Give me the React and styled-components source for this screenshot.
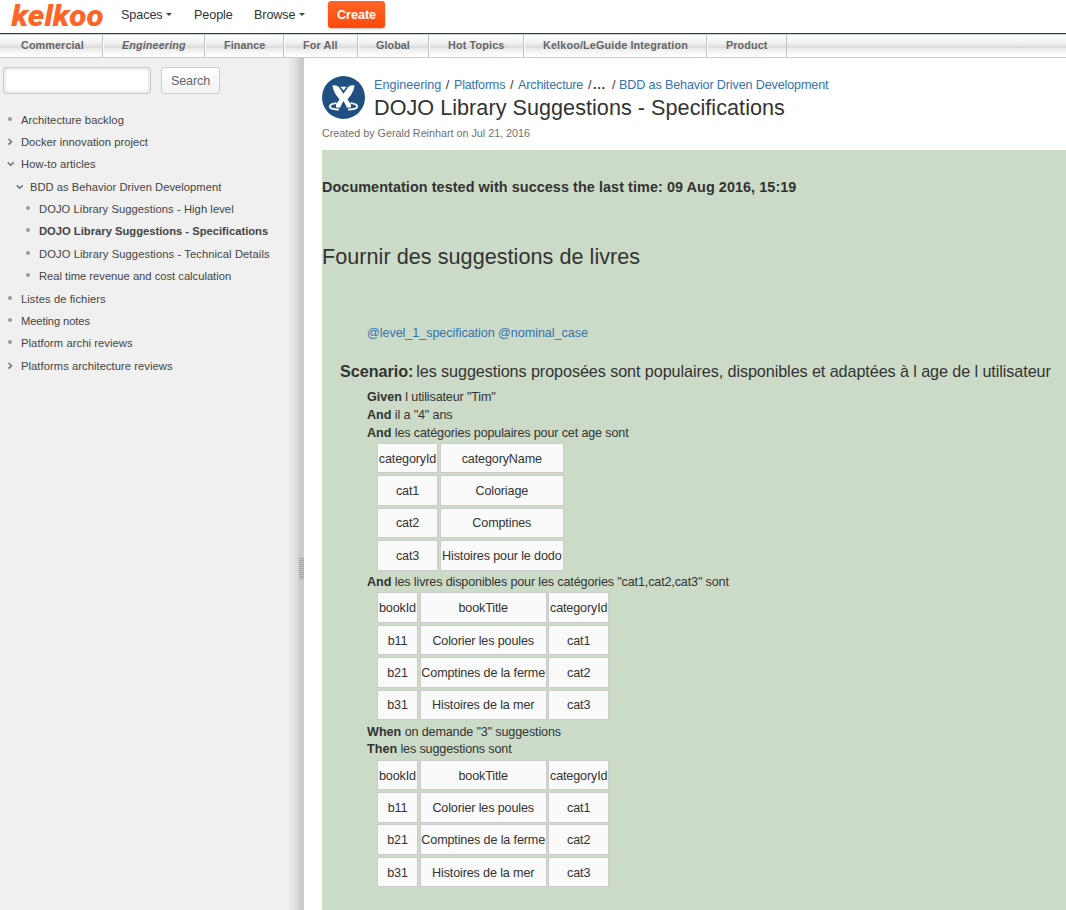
import React from "react";
import styled, { createGlobalStyle } from "styled-components";

const Global = createGlobalStyle`
  * { box-sizing: border-box; }
  html, body { margin: 0; height: 910px; overflow: hidden; background: #fff; }
  body { font-family: "Liberation Sans", Arial, sans-serif; font-size: 12.6px; color: #333; }
`;
const Page = styled.div`
  width: 1066px; height: 910px; display: flex; flex-direction: column; overflow: hidden;
`;
const Header = styled.header`
  height: 34px; flex: none; display: flex; align-items: flex-start; padding-left: 8px;
  background: #fff; border-bottom: 1px solid #2e3d54;
`;
const Logo = styled.svg`
  width: 100px; height: 33px; margin-right: 13px; flex: none; overflow: visible;
  text { font-family: Roboto, "Liberation Sans", sans-serif; font-weight: 900; font-style: italic; fill: #ff6428; }
`;
const NavItem = styled.a`
  width: ${(p) => p.$w}px; height: 30px; display: flex; align-items: center;
  gap: 3.5px; font-size: 12.6px; letter-spacing: -0.08px; color: #333; white-space: nowrap;
`;
const Caret = styled.i`
  border: 3px solid transparent; border-top-color: #444; border-bottom: 0; margin-top: -1px;
`;
const Create = styled.button`
  width: 57px; height: 27px; margin: 1px 0 0; padding: 0; border: 0; border-radius: 3px;
  background: linear-gradient(#ff6428, #ff4a0a); color: #fff; font: bold 12.6px "Liberation Sans", sans-serif;
  box-shadow: 0 1px 2px rgba(0,0,0,.25);
`;
const Menu = styled.nav`
  height: 24px; flex: none; display: flex; border-bottom: 1px solid #ccc; border-top: 1px solid #ccd0d8;
  background: linear-gradient(#fff 0%, #f2f2f2 35%, #dcdcdc 57%, #e8e8e8 61%, #f4f4f4 75%, #fff 100%);
`;
const MenuItem = styled.a`
  width: ${(p) => p.$w}px; padding-left: ${(p) => p.$pad || 18}px; border-right: 1px solid #c4c4c4;
  border-left: 1px solid #fff; font-size: 10.8px; font-weight: bold; line-height: 21px; color: #666;
  letter-spacing: ${(p) => p.$track || 0}px;
  font-style: ${(p) => (p.$on ? "italic" : "normal")}; white-space: nowrap;
  &:first-child { border-left-color: transparent; }
`;
const Body = styled.div`display: flex; flex: 1; min-height: 0;`;
const Sidebar = styled.aside`
  width: 299px; flex: none; padding-top: 9px;
  background: linear-gradient(90deg, #f0f0f0 0, #f0f0f0 287px, #e6e6e6 293px, #d4d4d4 299px);
`;
const SearchRow = styled.form`display: flex; gap: 10px; padding-left: 3px; margin-bottom: 14.5px;`;
const SearchInput = styled.input`
  width: 148px; height: 27px; border: 1px solid #ccc; border-radius: 3px; background: #fff;
  box-shadow: inset 0 0 4px rgba(0,0,0,.2);
`;
const SearchButton = styled.button`
  width: 59px; height: 27px; padding: 0; border: 1px solid #ccc; border-radius: 3px;
  background: linear-gradient(#fff, #f2f2f2); color: #666; font: 12.6px "Liberation Sans", sans-serif;
  letter-spacing: -0.15px;
`;
const TreeItem = styled.div`
  height: 22.36px; display: flex; align-items: center; padding-left: ${(p) => 5 + p.$level * 9}px;
  font-size: 11.2px; letter-spacing: ${(p) => p.$track || 0}px; color: #444;
  font-weight: ${(p) => (p.$on ? "bold" : "normal")}; white-space: nowrap;
`;
const TreeIcon = styled.svg`width: 10px; height: 10px; margin-right: 6px; flex: none;`;
const Splitter = styled.div`
  width: 5px; flex: none; background: #ccc; display: flex; align-items: flex-start; padding-top: 500px;
`;
const Grip = styled.div`
  width: 5px; height: 21px; background: repeating-linear-gradient(#a8a8a8 0 1px, #c2c2c2 1px 2px);
`;
const Main = styled.main`flex: 1; min-width: 0; padding: 18px 0 0 18px; display: flex; flex-direction: column;`;
const TitleBar = styled.div`display: flex; gap: 9px; height: 46px;`;
const SpaceIcon = styled.svg`width: 43px; height: 43px; flex: none;`;
const Crumbs = styled.div`
  display: flex; height: 18px; line-height: 18px; white-space: pre; font-size: 12.6px;
`;
const Crumb = styled.a`color: #3572b0; letter-spacing: ${(p) => p.$track || 0}px; width: ${(p) => p.$w}px;`;
const Ellipsis = styled.b`width: 14px; letter-spacing: 0.7px;`;
const Slash = styled.span`width: ${(p) => p.$w}px; padding-left: ${(p) => p.$pad}px;`;
const Title = styled.h1`
  margin: 0; font-size: 21.6px; line-height: 27px; font-weight: normal; letter-spacing: 0.04px; white-space: nowrap;
`;
const Meta = styled.div`font-size: 10.8px; line-height: 18px; color: #707070; height: 28px; padding-top: 2px; letter-spacing: -0.02px;`;
const Doc = styled.section`flex: 1; background: #ccdbc8; padding-top: 27px; white-space: nowrap;`;
const Tested = styled.div`font-size: 14.4px; font-weight: bold; line-height: 20px; letter-spacing: 0.07px;`;
const Feature = styled.h2`
  margin: 47px 0 0; font-size: 21.6px; font-weight: normal; line-height: 26px; letter-spacing: 0.04px;
`;
const Tags = styled.div`margin: 54px 0 0 45px; line-height: 18px; color: #3572b0; letter-spacing: -0.06px;`;
const Scenario = styled.h3`
  margin: 19px 0 0 18px; font-size: 16.2px; font-weight: normal; line-height: 20.4px; height: 26px;
  letter-spacing: -0.08px; word-spacing: -0.05px;
  b { letter-spacing: -0.05px; margin-right: -1.5px; }
`;
const Steps = styled.div`padding-left: 45px;`;
const Step = styled.div`
  line-height: 18px; height: 18px; padding-top: ${(p) => p.$lead ?? 0.6}px; letter-spacing: -0.15px;
  b { letter-spacing: 0; }
`;
const Table = styled.div`
  display: grid; grid-template-columns: ${(p) => p.$cols}; grid-auto-rows: 30.6px; gap: 1.8px;
  padding: 1.8px 0 1.8px 10px; margin-bottom: ${(p) => p.$after || 0}px;
`;
const Cell = styled.div`
  background: #fafafa; border: 1px solid #ccc; display: flex; align-items: center; justify-content: center;
  padding-top: 1.2px; letter-spacing: -0.14px;
`;

const MENU = [
  ["Commercial", 103, 20, 0.1], ["Engineering", 102, 18, 0.12], ["Finance", 79, 18, 0.08], ["For All", 74, 18, 0.12],
  ["Global", 71, 17, 0.05], ["Hot Topics", 95, 18, 0.15], ["Kelkoo/LeGuide Integration", 183, 18, 0.15], ["Product", 80, 18, 0.1],
];
const TREE = [
  ["Architecture backlog", 0, "dot", 0.08],
  ["Docker innovation project", 0, "closed", 0.03],
  ["How-to articles", 0, "open", 0.05],
  ["BDD as Behavior Driven Development", 1, "open", 0.03],
  ["DOJO Library Suggestions - High level", 2, "dot", 0.07],
  ["DOJO Library Suggestions - Specifications", 2, "dot", 0.01],
  ["DOJO Library Suggestions - Technical Details", 2, "dot", 0.09],
  ["Real time revenue and cost calculation", 2, "dot", 0],
  ["Listes de fichiers", 0, "dot", 0.08],
  ["Meeting notes", 0, "dot", -0.1],
  ["Platform archi reviews", 0, "dot", 0.07],
  ["Platforms architecture reviews", 0, "closed", 0.06],
];
const CATEGORIES = ["categoryId", "categoryName", "cat1", "Coloriage", "cat2", "Comptines", "cat3", "Histoires pour le dodo"];
const BOOKS = [
  "bookId", "bookTitle", "categoryId", "b11", "Colorier les poules", "cat1",
  "b21", "Comptines de la ferme", "cat2", "b31", "Histoires de la mer", "cat3",
];
const BOOK_COLS = "41px 126.8px 60.6px";

const Data = ({ cols, cells, after }) => (
  <Table $cols={cols} $after={after}>{cells.map((c, i) => <Cell key={i}>{c}</Cell>)}</Table>
);
const Marker = ({ kind }) => (
  <TreeIcon viewBox="0 0 10 10">
    {kind === "dot" && <circle cx="5" cy="4.1" r="2" fill="#999" />}
    {kind === "closed" && <path d="M3.5 2 L6.5 4.8 L3.5 7.6" fill="none" stroke="#707070" strokeWidth="1.5" />}
    {kind === "open" && <path d="M2.7 3.4 L5.7 6.2 L8.7 3.4" fill="none" stroke="#707070" strokeWidth="1.5" />}
  </TreeIcon>
);

export default function App() {
  return (
    <Page>
      <Global />
      <Header>
        <Logo viewBox="0 0 100 33">
          <text x="3.5" y="25.7" fontSize="29" textLength="92" lengthAdjust="spacingAndGlyphs">kelkoo</text>
        </Logo>
        <NavItem $w={73}>Spaces<Caret /></NavItem>
        <NavItem $w={60}>People</NavItem>
        <NavItem $w={74}>Browse<Caret /></NavItem>
        <Create>Create</Create>
      </Header>
      <Menu>
        {MENU.map(([t, w, pad, track]) => (
          <MenuItem key={t} $w={w} $pad={pad} $track={track} $on={t === "Engineering"}>{t}</MenuItem>
        ))}
      </Menu>
      <Body>
        <Sidebar>
          <SearchRow>
            <SearchInput />
            <SearchButton type="button">Search</SearchButton>
          </SearchRow>
          {TREE.map(([t, level, kind, track]) => (
            <TreeItem key={t} $level={level} $track={track} $on={t.endsWith("Specifications")}>
              <Marker kind={kind} />{t}
            </TreeItem>
          ))}
        </Sidebar>
        <Splitter><Grip /></Splitter>
        <Main>
          <TitleBar>
            <SpaceIcon viewBox="0 0 43 43">
              <circle cx="21.5" cy="21.5" r="21.5" fill="#205081" />
              <path d="M10.4 9.6 Q14.5 8.6 17 11.2 L29 28.5 V31.6 H24 L14 19 Q10.8 14 10.4 9.6Z" fill="#fff" />
              <path d="M32.6 9.6 Q28.5 8.6 26 11.2 L14 28.5 V31.6 H19 L29 19 Q32.2 14 32.6 9.6Z" fill="#fff" />
              <path d="M18.4 10.8 H24.6 L21.5 14.6Z" fill="#fff" />
              <path d="M21.5 25 L25 31.6 H18Z" fill="#205081" />
              <path d="M14.5 27.2 C7.5 28 6 31 10 32.7 C12 33.4 14.5 33.6 17 33.4 M28.5 27.2 C35.5 28 37 31 33 32.7 C31 33.4 28.5 33.6 26 33.4" fill="none" stroke="#fff" strokeWidth="1.8" />
            </SpaceIcon>
            <div>
              <Crumbs>
                <Crumb $w={67}>Engineering</Crumb><Slash $w={13} $pad={4.7}>/</Slash>
                <Crumb $w={51} $track={-0.22}>Platforms</Crumb><Slash $w={13} $pad={5}>/</Slash>
                <Crumb $w={65} $track={-0.17}>Architecture</Crumb><Slash $w={10} $pad={5}>/</Slash>
                <Ellipsis>...</Ellipsis><Slash $w={12} $pad={5}>/</Slash>
                <Crumb $w={210} $track={-0.14}>BDD as Behavior Driven Development</Crumb>
              </Crumbs>
              <Title>DOJO Library Suggestions - Specifications</Title>
            </div>
          </TitleBar>
          <Meta>Created by Gerald Reinhart on Jul 21, 2016</Meta>
          <Doc>
            <Tested>Documentation tested with success the last time: 09 Aug 2016, 15:19</Tested>
            <Feature>Fournir des suggestions de livres</Feature>
            <Tags>@level_1_specification @nominal_case</Tags>
            <Scenario><b>Scenario:</b> les suggestions proposées sont populaires, disponibles et adaptées à l age de l utilisateur</Scenario>
            <Steps>
              <Step><b>Given</b> l utilisateur "Tim"</Step>
              <Step><b>And</b> il a "4" ans</Step>
              <Step><b>And</b> les catégories populaires pour cet age sont</Step>
              <Data cols="61px 124px" cells={CATEGORIES} after={0.2} />
              <Step><b>And</b> les livres disponibles pour les catégories "cat1,cat2,cat3" sont</Step>
              <Data cols={BOOK_COLS} cells={BOOKS} />
              <Step><b>When</b> on demande "3" suggestions</Step>
              <Step $lead={0}><b>Then</b> les suggestions sont</Step>
              <Data cols={BOOK_COLS} cells={BOOKS} />
            </Steps>
          </Doc>
        </Main>
      </Body>
    </Page>
  );
}
